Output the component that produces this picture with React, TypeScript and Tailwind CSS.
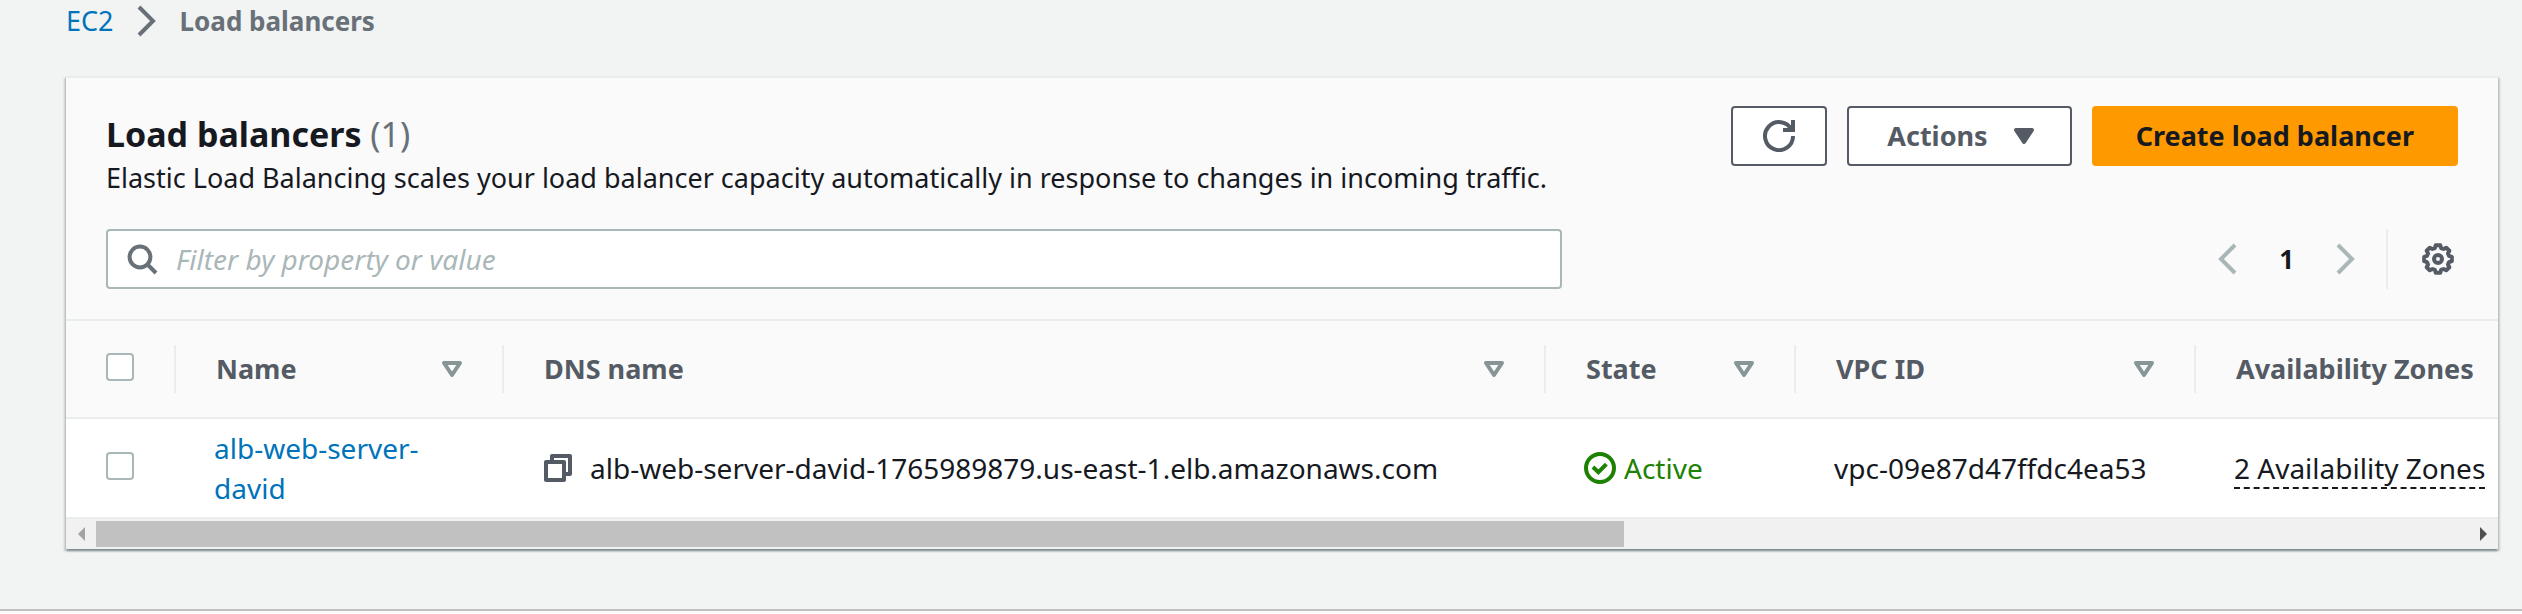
import React from "react";
import type { ReactNode } from "react";

const GEAR_TEETH = 8;

const gearPath =
  Array.from({ length: GEAR_TEETH }, (_, i) => {
    const base = (i * 360) / GEAR_TEETH - 90;
    const points: [number, number][] = [
      [-16, 5.7],
      [-9, 7],
      [9, 7],
      [16, 5.7],
    ];
    return points
      .map(([offset, r], j) => {
        const a = ((base + offset) * Math.PI) / 180;
        const cmd = i === 0 && j === 0 ? "M" : "L";
        return `${cmd}${(8 + r * Math.cos(a)).toFixed(2)} ${(8 + r * Math.sin(a)).toFixed(2)}`;
      })
      .join("");
  }).join("") + "Z";

function Icon({ className = "fill-none", children }: { className?: string; children: ReactNode }) {
  return (
    <svg
      viewBox="0 0 16 16"
      aria-hidden="true"
      className={`size-8 shrink-0 stroke-current stroke-2 ${className}`}
    >
      {children}
    </svg>
  );
}

const ChevronRight = () => (
  <Icon>
    <path d="M4 1l7 7-7 7" />
  </Icon>
);

const ChevronLeft = () => (
  <Icon>
    <path d="M12 1L5 8l7 7" />
  </Icon>
);

function HeaderCell({ label, sortable = true }: { label: string; sortable?: boolean }) {
  return (
    <th scope="col" className="p-0 text-left font-bold">
      <div className="flex h-12 items-center justify-between border-l-2 border-[#eaeded] pr-[34px] pl-10">
        <span className="whitespace-nowrap">{label}</span>
        {sortable && (
          <button type="button" aria-label={`Sort by ${label}`} className="text-[#879596]">
            <Icon>
              <path d="M4 5h8l-4 6-4-6z" strokeLinejoin="round" />
            </Icon>
          </button>
        )}
      </div>
    </th>
  );
}

function Checkbox({ label }: { label: string }) {
  return (
    <input
      type="checkbox"
      aria-label={label}
      className="block size-7 appearance-none rounded border-2 border-[#aab7b8] bg-white checked:bg-[#0073bb]"
    />
  );
}

export default function App() {
  return (
    <div className="flex min-h-screen flex-col bg-[#f2f3f3] font-['Noto_Sans',sans-serif] text-[27px] leading-10 text-[#16191f]">
      <main className="grow pr-6 pb-[60px] pl-[66px]">
        <nav aria-label="Breadcrumb" className="flex h-[76px] items-start">
          <ol className="flex h-[42px] items-center">
            <li>
              <a href="#ec2" className="text-[#0073bb]">
                EC2
              </a>
            </li>
            <li aria-hidden="true" className="mx-[17px] text-[#687078]">
              <ChevronRight />
            </li>
            <li aria-current="page" className="text-[26px] font-bold text-[#687078]">
              Load balancers
            </li>
          </ol>
        </nav>

        <section className="border-t-2 border-[#eaeded] bg-[#fafafa] shadow-[0_2px_2px_0_rgba(0,28,36,0.3),2px_2px_2px_0_rgba(0,28,36,0.15),-2px_2px_2px_0_rgba(0,28,36,0.15)]">
          <div className="px-10 pt-7 pb-[30px]">
            <div className="flex items-start justify-between gap-5">
              <div>
                <h1 className="text-[34px] leading-[56px] font-bold">
                  Load balancers <span className="font-normal text-[#687078]">(1)</span>
                </h1>
                <p className="leading-[31px]">
                  Elastic Load Balancing scales your load balancer capacity automatically in response to changes in
                  incoming traffic.
                </p>
              </div>
              <div className="flex shrink-0 gap-5 font-bold text-[#545b64]">
                <button
                  type="button"
                  aria-label="Refresh"
                  className="flex h-[60px] w-24 items-center justify-center rounded border-2 border-[#545b64] bg-white"
                >
                  <Icon>
                    <path d="M10 5h5V0" />
                    <path d="M15 8a7 7 0 1 1-.7-3" />
                  </Icon>
                </button>
                <button
                  type="button"
                  className="flex h-[60px] items-center gap-5 rounded border-2 border-[#545b64] bg-white pr-[30px] pl-[38px]"
                >
                  Actions
                  <Icon className="fill-current">
                    <path d="M4 5h8l-4 6-4-6z" strokeLinejoin="round" />
                  </Icon>
                </button>
                <button type="button" className="h-[60px] rounded bg-[#ff9900] px-11 text-[#16191f]">
                  Create load balancer
                </button>
              </div>
            </div>

            <div className="mt-9 flex items-center justify-between">
              <label className="flex h-[60px] w-[61.9%] items-center gap-[18px] rounded border-2 border-[#aab7b8] bg-white px-[18px] text-[#687078]">
                <Icon>
                  <circle cx="7" cy="7" r="5.2" />
                  <path d="M15 15l-4.5-4.5" />
                </Icon>
                <input
                  type="text"
                  aria-label="Filter load balancers"
                  placeholder="Filter by property or value"
                  className="min-w-0 grow bg-transparent text-[28px] text-[#16191f] outline-none placeholder:text-[#aab7b8] placeholder:italic"
                />
              </label>
              <div className="flex h-[60px] items-center">
                <nav aria-label="Pagination" className="flex items-center gap-9 text-[#aab7b8]">
                  <button type="button" aria-label="Previous page">
                    <ChevronLeft />
                  </button>
                  <button type="button" aria-current="page" className="text-[26px] font-bold text-[#16191f]">
                    1
                  </button>
                  <button type="button" aria-label="Next page">
                    <ChevronRight />
                  </button>
                </nav>
                <div className="ml-6 flex h-full items-center border-l-2 border-[#eaeded] pr-1 pl-[34px]">
                  <button type="button" aria-label="Preferences" className="text-[#545b64]">
                    <Icon>
                      <path d={gearPath} strokeLinejoin="round" />
                      <circle cx="8" cy="8" r="2" />
                    </Icon>
                  </button>
                </div>
              </div>
            </div>
          </div>

          <div className="overflow-hidden">
            <table className="w-full table-fixed border-collapse">
              <colgroup>
                <col className="w-[108px]" />
                <col className="w-[328px]" />
                <col />
                <col className="w-[250px]" />
                <col className="w-[400px]" />
                <col className="w-[304px]" />
              </colgroup>
              <thead>
                <tr className="h-[98px] border-y-2 border-[#eaeded] text-[#545b64]">
                  <th scope="col" className="pt-0 pr-0 pb-1 pl-10">
                    <Checkbox label="Select all load balancers" />
                  </th>
                  <HeaderCell label="Name" />
                  <HeaderCell label="DNS name" />
                  <HeaderCell label="State" />
                  <HeaderCell label="VPC ID" />
                  <HeaderCell label="Availability Zones" sortable={false} />
                </tr>
              </thead>
              <tbody className="text-[28px]">
                <tr className="h-[100px] border-b-2 border-[#eaeded] bg-white">
                  <td className="pt-0 pr-0 pb-1 pl-10">
                    <Checkbox label="Select alb-web-server-david" />
                  </td>
                  <td className="px-10 py-0">
                    <a href="#alb-web-server-david" className="text-[#0073bb]">
                      alb-web-server-david
                    </a>
                  </td>
                  <td className="px-10 py-0">
                    <div className="flex items-center gap-4">
                      <button type="button" aria-label="Copy DNS name" className="text-[#545b64]">
                        <Icon>
                          <path d="M2 5h9v9H2z" strokeLinejoin="round" />
                          <path d="M5 5V2h9v9h-3" strokeLinejoin="round" />
                        </Icon>
                      </button>
                      <span>alb-web-server-david-1765989879.us-east-1.elb.amazonaws.com</span>
                    </div>
                  </td>
                  <td className="py-0 pr-0 pl-10">
                    <span className="flex items-center gap-2 text-[#1d8102]">
                      <Icon>
                        <circle cx="8" cy="8" r="7" />
                        <path d="M4.5 7.5l2.7 2.6 4-4" />
                      </Icon>
                      Active
                    </span>
                  </td>
                  <td className="py-0 pr-0 pl-10 whitespace-nowrap">vpc-09e87d47ffdc4ea53</td>
                  <td className="py-0 pr-0 pl-10 whitespace-nowrap">
                    <span className="border-b-2 border-dashed border-[#16191f]">2 Availability Zones</span>
                  </td>
                </tr>
              </tbody>
            </table>
          </div>

          <div className="flex h-[30px] items-center bg-[#f1f1f1]">
            <button type="button" aria-label="Scroll left" className="flex w-[30px] justify-center text-[#a3a3a3]">
              <svg viewBox="0 0 7 14" aria-hidden="true" className="h-3.5 w-[7px] fill-current">
                <path d="M7 0v14L0 7z" />
              </svg>
            </button>
            <div className="h-[26px] grow">
              <div className="h-full w-[64.4%] bg-[#c1c1c1]" />
            </div>
            <button type="button" aria-label="Scroll right" className="flex w-[30px] justify-center text-[#505050]">
              <svg viewBox="0 0 7 14" aria-hidden="true" className="h-3.5 w-[7px] fill-current">
                <path d="M0 0v14l7-7z" />
              </svg>
            </button>
          </div>
        </section>
      </main>
      <footer className="h-[5px] border-t-2 border-[#bfc1c1] bg-[#fafafa]" />
    </div>
  );
}
